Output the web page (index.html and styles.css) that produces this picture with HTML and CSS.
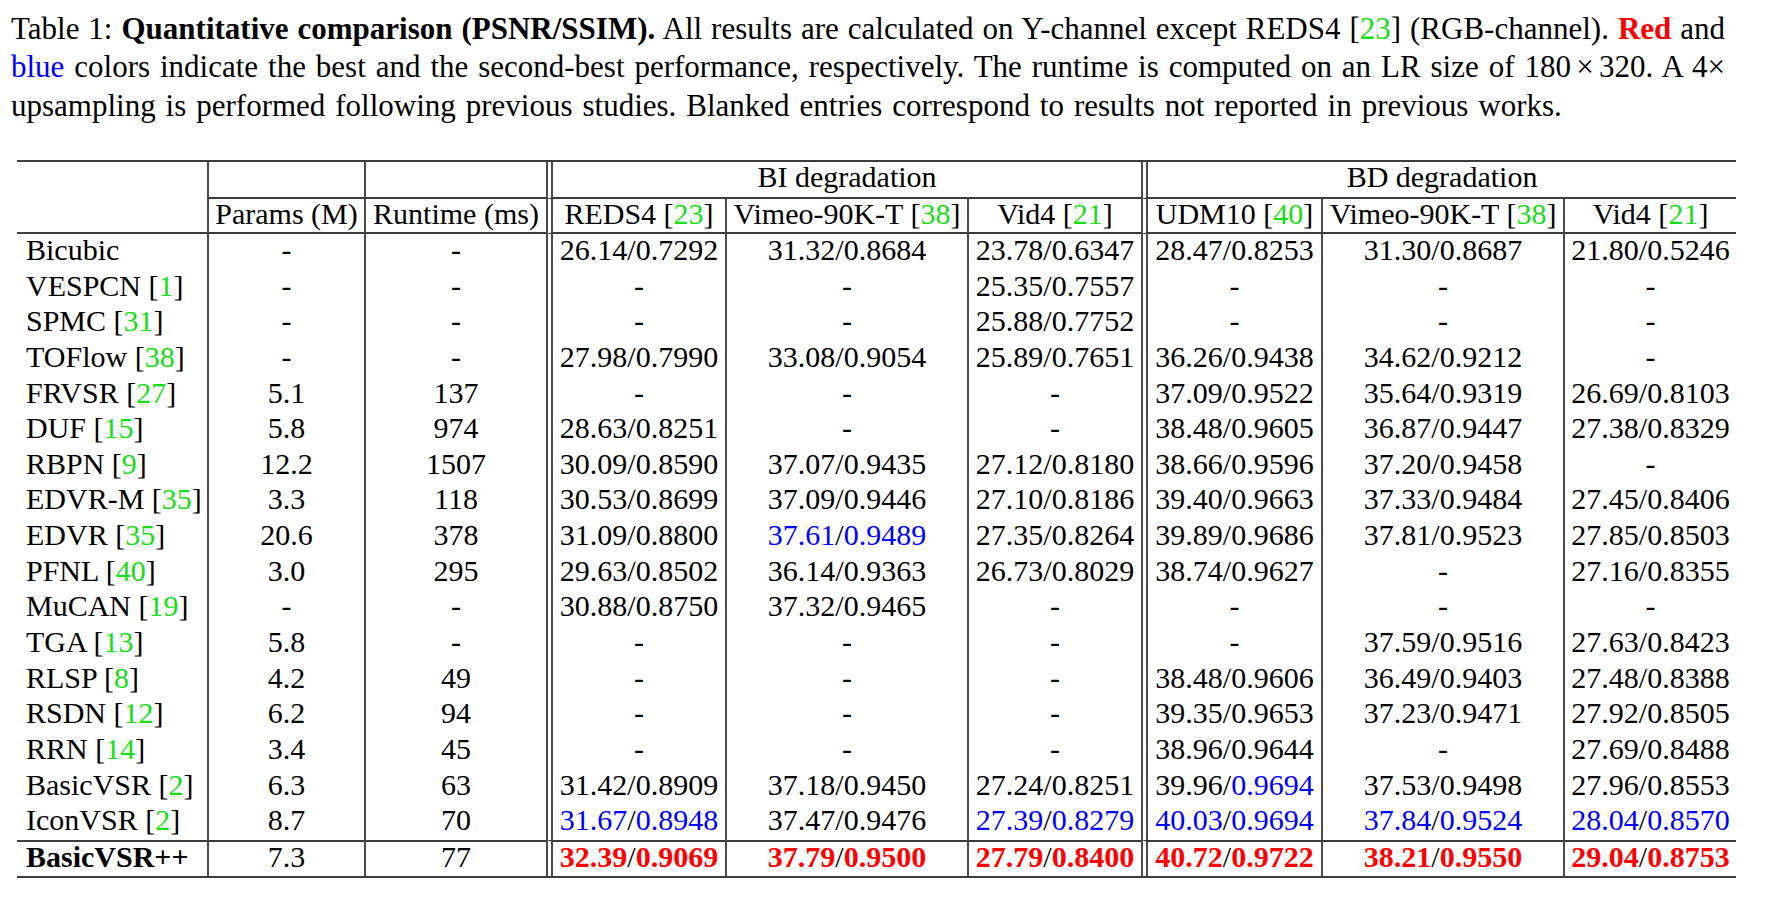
FILE: index.html
```html
<!DOCTYPE html>
<html lang="en">
<head>
<meta charset="utf-8">
<title>Table 1: Quantitative comparison (PSNR/SSIM)</title>
<link rel="stylesheet" href="styles.css">
</head>
<body>
<div class="page">
  <p class="caption">
    <span class="line just">Table 1: <b>Quantitative comparison (PSNR/SSIM).</b> All results are calculated on Y-channel except REDS4 [<span class="g">23</span>] (RGB-channel). <b class="red">Red</b> and</span>
    <span class="line just"><span class="blue">blue</span> colors indicate the best and the second-best performance, respectively. The runtime is computed on an LR size of 180<span class="op">×</span>320. A 4×</span>
    <span class="line last">upsampling is performed following previous studies. Blanked entries correspond to results not reported in previous works.</span>
  </p>

  <table class="results">
    <colgroup>
      <col class="c-name">
      <col class="c-params">
      <col class="c-run">
      <col class="c-reds">
      <col class="c-vimeo">
      <col class="c-vid4">
      <col class="c-udm">
      <col class="c-vimeo2">
      <col class="c-vid4b">
    </colgroup>
    <thead>
      <tr class="h1">
        <th class="nm"></th>
        <th class="vl ul"></th>
        <th class="vl ul"></th>
        <th class="dl ul" colspan="3">BI degradation</th>
        <th class="dl ul" colspan="3">BD degradation</th>
      </tr>
      <tr class="h2">
        <th class="nm"></th>
        <th class="vl">Params (M)</th>
        <th class="vl">Runtime (ms)</th>
        <th class="dl">REDS4 [<span class="g">23</span>]</th>
        <th class="vl">Vimeo-90K-T [<span class="g">38</span>]</th>
        <th class="vl">Vid4 [<span class="g">21</span>]</th>
        <th class="dl">UDM10 [<span class="g">40</span>]</th>
        <th class="vl">Vimeo-90K-T [<span class="g">38</span>]</th>
        <th class="vl">Vid4 [<span class="g">21</span>]</th>
      </tr>
    </thead>
    <tbody>
      <tr>
        <td class="nm">Bicubic</td>
        <td class="vl n">-</td><td class="vl n">-</td>
        <td class="dl n">26.14/0.7292</td><td class="vl n">31.32/0.8684</td><td class="vl n">23.78/0.6347</td>
        <td class="dl n">28.47/0.8253</td><td class="vl n">31.30/0.8687</td><td class="vl n">21.80/0.5246</td>
      </tr>
      <tr>
        <td class="nm">VESPCN [<span class="g">1</span>]</td>
        <td class="vl n">-</td><td class="vl n">-</td>
        <td class="dl n">-</td><td class="vl n">-</td><td class="vl n">25.35/0.7557</td>
        <td class="dl n">-</td><td class="vl n">-</td><td class="vl n">-</td>
      </tr>
      <tr>
        <td class="nm">SPMC [<span class="g">31</span>]</td>
        <td class="vl n">-</td><td class="vl n">-</td>
        <td class="dl n">-</td><td class="vl n">-</td><td class="vl n">25.88/0.7752</td>
        <td class="dl n">-</td><td class="vl n">-</td><td class="vl n">-</td>
      </tr>
      <tr>
        <td class="nm">TOFlow [<span class="g">38</span>]</td>
        <td class="vl n">-</td><td class="vl n">-</td>
        <td class="dl n">27.98/0.7990</td><td class="vl n">33.08/0.9054</td><td class="vl n">25.89/0.7651</td>
        <td class="dl n">36.26/0.9438</td><td class="vl n">34.62/0.9212</td><td class="vl n">-</td>
      </tr>
      <tr>
        <td class="nm">FRVSR [<span class="g">27</span>]</td>
        <td class="vl n">5.1</td><td class="vl n">137</td>
        <td class="dl n">-</td><td class="vl n">-</td><td class="vl n">-</td>
        <td class="dl n">37.09/0.9522</td><td class="vl n">35.64/0.9319</td><td class="vl n">26.69/0.8103</td>
      </tr>
      <tr>
        <td class="nm">DUF [<span class="g">15</span>]</td>
        <td class="vl n">5.8</td><td class="vl n">974</td>
        <td class="dl n">28.63/0.8251</td><td class="vl n">-</td><td class="vl n">-</td>
        <td class="dl n">38.48/0.9605</td><td class="vl n">36.87/0.9447</td><td class="vl n">27.38/0.8329</td>
      </tr>
      <tr>
        <td class="nm">RBPN [<span class="g">9</span>]</td>
        <td class="vl n">12.2</td><td class="vl n">1507</td>
        <td class="dl n">30.09/0.8590</td><td class="vl n">37.07/0.9435</td><td class="vl n">27.12/0.8180</td>
        <td class="dl n">38.66/0.9596</td><td class="vl n">37.20/0.9458</td><td class="vl n">-</td>
      </tr>
      <tr>
        <td class="nm">EDVR-M [<span class="g">35</span>]</td>
        <td class="vl n">3.3</td><td class="vl n">118</td>
        <td class="dl n">30.53/0.8699</td><td class="vl n">37.09/0.9446</td><td class="vl n">27.10/0.8186</td>
        <td class="dl n">39.40/0.9663</td><td class="vl n">37.33/0.9484</td><td class="vl n">27.45/0.8406</td>
      </tr>
      <tr>
        <td class="nm">EDVR [<span class="g">35</span>]</td>
        <td class="vl n">20.6</td><td class="vl n">378</td>
        <td class="dl n">31.09/0.8800</td><td class="vl n"><span class="blue">37.61</span>/<span class="blue">0.9489</span></td><td class="vl n">27.35/0.8264</td>
        <td class="dl n">39.89/0.9686</td><td class="vl n">37.81/0.9523</td><td class="vl n">27.85/0.8503</td>
      </tr>
      <tr>
        <td class="nm">PFNL [<span class="g">40</span>]</td>
        <td class="vl n">3.0</td><td class="vl n">295</td>
        <td class="dl n">29.63/0.8502</td><td class="vl n">36.14/0.9363</td><td class="vl n">26.73/0.8029</td>
        <td class="dl n">38.74/0.9627</td><td class="vl n">-</td><td class="vl n">27.16/0.8355</td>
      </tr>
      <tr>
        <td class="nm">MuCAN [<span class="g">19</span>]</td>
        <td class="vl n">-</td><td class="vl n">-</td>
        <td class="dl n">30.88/0.8750</td><td class="vl n">37.32/0.9465</td><td class="vl n">-</td>
        <td class="dl n">-</td><td class="vl n">-</td><td class="vl n">-</td>
      </tr>
      <tr>
        <td class="nm">TGA [<span class="g">13</span>]</td>
        <td class="vl n">5.8</td><td class="vl n">-</td>
        <td class="dl n">-</td><td class="vl n">-</td><td class="vl n">-</td>
        <td class="dl n">-</td><td class="vl n">37.59/0.9516</td><td class="vl n">27.63/0.8423</td>
      </tr>
      <tr>
        <td class="nm">RLSP [<span class="g">8</span>]</td>
        <td class="vl n">4.2</td><td class="vl n">49</td>
        <td class="dl n">-</td><td class="vl n">-</td><td class="vl n">-</td>
        <td class="dl n">38.48/0.9606</td><td class="vl n">36.49/0.9403</td><td class="vl n">27.48/0.8388</td>
      </tr>
      <tr>
        <td class="nm">RSDN [<span class="g">12</span>]</td>
        <td class="vl n">6.2</td><td class="vl n">94</td>
        <td class="dl n">-</td><td class="vl n">-</td><td class="vl n">-</td>
        <td class="dl n">39.35/0.9653</td><td class="vl n">37.23/0.9471</td><td class="vl n">27.92/0.8505</td>
      </tr>
      <tr>
        <td class="nm">RRN [<span class="g">14</span>]</td>
        <td class="vl n">3.4</td><td class="vl n">45</td>
        <td class="dl n">-</td><td class="vl n">-</td><td class="vl n">-</td>
        <td class="dl n">38.96/0.9644</td><td class="vl n">-</td><td class="vl n">27.69/0.8488</td>
      </tr>
      <tr>
        <td class="nm">BasicVSR [<span class="g">2</span>]</td>
        <td class="vl n">6.3</td><td class="vl n">63</td>
        <td class="dl n">31.42/0.8909</td><td class="vl n">37.18/0.9450</td><td class="vl n">27.24/0.8251</td>
        <td class="dl n">39.96/<span class="blue">0.9694</span></td><td class="vl n">37.53/0.9498</td><td class="vl n">27.96/0.8553</td>
      </tr>
      <tr>
        <td class="nm">IconVSR [<span class="g">2</span>]</td>
        <td class="vl n">8.7</td><td class="vl n">70</td>
        <td class="dl n"><span class="blue">31.67</span>/<span class="blue">0.8948</span></td><td class="vl n">37.47/0.9476</td><td class="vl n"><span class="blue">27.39</span>/<span class="blue">0.8279</span></td>
        <td class="dl n"><span class="blue">40.03</span>/<span class="blue">0.9694</span></td><td class="vl n"><span class="blue">37.84</span>/<span class="blue">0.9524</span></td><td class="vl n"><span class="blue">28.04</span>/<span class="blue">0.8570</span></td>
      </tr>
    </tbody>
    <tbody class="ours">
      <tr>
        <td class="nm"><b>BasicVSR++</b></td>
        <td class="vl n">7.3</td><td class="vl n">77</td>
        <td class="dl n"><b class="red">32.39</b>/<b class="red">0.9069</b></td><td class="vl n"><b class="red">37.79</b>/<b class="red">0.9500</b></td><td class="vl n"><b class="red">27.79</b>/<b class="red">0.8400</b></td>
        <td class="dl n"><b class="red">40.72</b>/<b class="red">0.9722</b></td><td class="vl n"><b class="red">38.21</b>/<b class="red">0.9550</b></td><td class="vl n"><b class="red">29.04</b>/<b class="red">0.8753</b></td>
      </tr>
    </tbody>
  </table>
</div>
</body>
</html>
```

FILE: styles.css
```css
html, body {
  margin: 0;
  padding: 0;
  background: #ffffff;
}

body {
  font-family: "Liberation Serif", "Times New Roman", serif;
  font-size: 30px;
  color: #000000;
}

.page {
  padding: 10px 0 0 11px;
}

.caption {
  margin: 0;
  width: 1714px;
  font-size: 31px;
  line-height: 38.3px;
  text-align: left;
}

.caption .line {
  display: block;
  white-space: nowrap;
}

.caption .line.just {
  text-align: justify;
  text-align-last: justify;
}

.caption .line.last {
  word-spacing: 2.2px;
}

.op {
  margin: 0 0.17em;
}

.g {
  color: #17dd17;
}

.blue {
  color: #0000ff;
}

.red {
  color: #ff0000;
}

b {
  font-weight: bold;
}

.results {
  margin: 35px 0 0 6px;
  border-collapse: separate;
  border-spacing: 0;
  table-layout: fixed;
  width: 1719px;
  border-top: 2px solid #3c3c3c;
  border-bottom: 2px solid #3c3c3c;
}

.c-name { width: 190px; }
.c-params { width: 157px; }
.c-run { width: 182px; }
.c-reds { width: 179px; }
.c-vimeo { width: 242px; }
.c-vid4 { width: 174px; }
.c-udm { width: 180px; }
.c-vimeo2 { width: 242px; }
.c-vid4b { width: 173px; }

.results th,
.results td {
  padding: 0 0 4px 0;
  font-weight: normal;
  text-align: center;
  white-space: nowrap;
  line-height: 31.65px;
  vertical-align: top;
  overflow: visible;
}

.results .nm {
  text-align: left;
  padding-left: 9px;
}

.results .vl {
  border-left: 2px solid #4a4a4a;
}

.results .dl {
  border-left: 7px double #4a4a4a;
}

.results .h1 th {
  line-height: 30px;
  padding-bottom: 5px;
  border-bottom: 2px solid transparent;
}

.results .h1 th.ul {
  border-bottom-color: #3c3c3c;
}

.results .h2 th {
  line-height: 29px;
  padding-bottom: 4px;
  border-bottom: 2px solid #3c3c3c;
}

.results .ours td {
  border-top: 2px solid #3c3c3c;
  line-height: 29px;
  padding-bottom: 5px;
}
```
